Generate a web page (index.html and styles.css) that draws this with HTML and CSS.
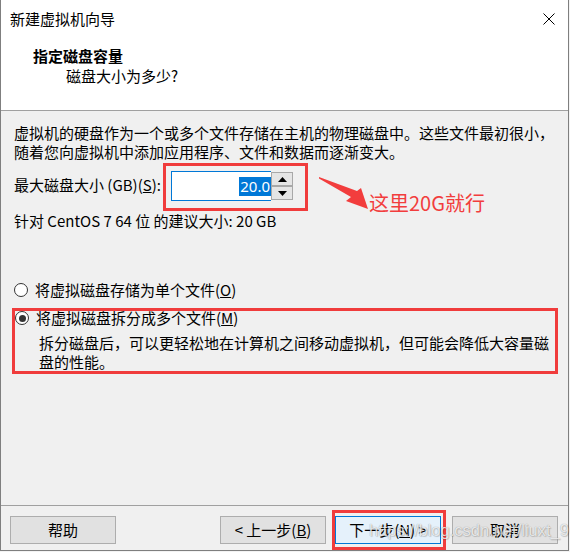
FILE: index.html
```html
<!DOCTYPE html>
<html lang="zh-CN">
<head>
<meta charset="utf-8">
<title>新建虚拟机向导</title>
<link rel="stylesheet" href="styles.css">
</head>
<body>
<div class="window">
  <div class="top">
    <div class="titlebar">
      <span class="title">新建虚拟机向导</span>
      <svg class="close" width="12" height="12" viewBox="0 0 12 12"><path d="M0.5 0.5 L11.5 11.5 M11.5 0.5 L0.5 11.5" stroke="#000" stroke-width="1" fill="none"/></svg>
    </div>
    <div class="heading">指定磁盘容量</div>
    <div class="sub">磁盘大小为多少?</div>
  </div>
  <div class="content">
    <p class="intro">虚拟机的硬盘作为一个或多个文件存储在主机的物理磁盘中。这些文件最初很小，<br>随着您向虚拟机中添加应用程序、文件和数据而逐渐变大。</p>
    <div class="size-row">
      <span class="size-label">最大磁盘大小 (GB)(<u>S</u>):</span>
      <div class="mark spin-mark">
        <div class="spin">
          <div class="spin-input"><span class="sel">20.0</span></div>
          <div class="spin-btns">
            <div class="spin-btn"><svg width="9" height="5" viewBox="0 0 9 5"><polygon points="4.5,0 9,5 0,5" fill="#000"/></svg></div>
            <div class="spin-btn"><svg width="9" height="5" viewBox="0 0 9 5"><polygon points="0,0 9,0 4.5,5" fill="#000"/></svg></div>
          </div>
        </div>
      </div>
      <svg class="arrow" width="62" height="42" viewBox="0 0 62 42"><polygon points="8,7 46,21 50,18 57,39 35,31 40,27 8,8.5" fill="#f23d3d"/></svg>
      <span class="note">这里20G就行</span>
    </div>
    <div class="rec">针对 CentOS 7 64 位 的建议大小: 20 GB</div>
    <div class="radio-row first">
      <span class="radio"></span>
      <span class="radio-text">将虚拟磁盘存储为单个文件(<u>O</u>)</span>
    </div>
    <div class="mark option-mark">
      <div class="radio-row second">
        <span class="radio checked"></span>
        <span class="radio-text">将虚拟磁盘拆分成多个文件(<u>M</u>)</span>
      </div>
      <p class="desc">拆分磁盘后，可以更轻松地在计算机之间移动虚拟机，但可能会降低大容量磁<br>盘的性能。</p>
    </div>
  </div>
  <div class="footer">
    <div class="btn help">帮助</div>
    <div class="btn back">&lt; 上一步(<u>B</u>)</div>
    <div class="mark next-mark"><div class="btn next">下一步(<u>N</u>) &gt;</div></div>
    <div class="btn cancel">取消</div>
  </div>
  <div class="watermark">https://blog.csdn.net/liuxt_9</div>
</div>
</body>
</html>
```
FILE: styles.css
```css
html, body {
  margin: 0;
  padding: 0;
}
body {
  width: 570px;
  height: 552px;
  overflow: hidden;
  background: #f3f3f3;
  font-family: "Noto Sans CJK SC", "Microsoft YaHei", sans-serif;
  font-size: 15px;
  color: #000;
}
.window {
  position: relative;
  width: 567px;
  height: 550px;
  border-left: 1px solid #7f7f7f;
  border-right: 1px solid #7f7f7f;
  border-bottom: 1px solid #7f7f7f;
  background: #f0f0f0;
  display: flex;
  flex-direction: column;
}
.top {
  height: 110px;
  background: #fff;
  border-bottom: 1px solid #a0a0a0;
  flex: none;
}
.titlebar {
  height: 38px;
  display: flex;
  align-items: center;
  justify-content: space-between;
  padding-left: 9px;
  padding-right: 13px;
}
.title {
  line-height: 20px;
}
.close {
  display: block;
}
.heading {
  margin-top: 8px;
  padding-left: 32px;
  font-weight: bold;
  line-height: 20px;
}
.sub {
  padding-left: 65px;
  line-height: 20px;
}
.content {
  flex: 1;
  padding: 12px 0 0 13px;
}
.intro {
  margin: 0;
  line-height: 19px;
  white-space: nowrap;
}
.size-row {
  display: flex;
  align-items: flex-start;
  margin-top: 2px;
}
.size-label {
  width: 149px;
  margin-top: 12px;
  line-height: 20px;
  white-space: nowrap;
}
.mark {
  border: 3px solid #f03c3c;
}
.spin-mark {
  padding: 5px 12px 7px 5px;
}
.spin {
  display: flex;
  height: 30px;
}
.spin-input {
  width: 99px;
  height: 28px;
  border: 1px solid #0078d7;
  border-right: none;
  background: #fff;
  display: flex;
  align-items: center;
  justify-content: flex-end;
}
.sel {
  background: #0078d7;
  color: #fff;
  font-family: "Noto Sans", "Segoe UI", sans-serif;
  font-size: 15px;
  line-height: 19px;
  padding: 0 1px;
}
.spin-btns {
  width: 22px;
  display: flex;
  flex-direction: column;
  justify-content: space-between;
  padding: 1px 0;
  box-sizing: border-box;
}
.spin-btn {
  height: 13px;
  border: 1px solid #a8a8a8;
  background: #e5e5e5;
  display: flex;
  align-items: center;
  justify-content: center;
}
.spin-btn svg {
  display: block;
}
.arrow {
  display: block;
  margin-left: 3px;
  margin-top: 7px;
}
.note {
  margin-left: -4px;
  margin-top: 28px;
  color: #f23d3d;
  font-size: 20px;
  line-height: 24px;
  white-space: nowrap;
}
.rec {
  margin-top: -3px;
  line-height: 18px;
}
.radio-row {
  display: flex;
  align-items: center;
}
.radio-row.first {
  margin-top: 50px;
  height: 20px;
  margin-left: 0;
}
.radio {
  width: 12px;
  height: 12px;
  border: 1px solid #333;
  border-radius: 50%;
  background: #fff;
  position: relative;
  flex: none;
}
.radio.checked::after {
  content: "";
  position: absolute;
  left: 2.5px;
  top: 2.5px;
  width: 7px;
  height: 7px;
  border-radius: 50%;
  background: #333;
}
.radio-text {
  margin-left: 7px;
  line-height: 20px;
  white-space: nowrap;
}
.option-mark {
  margin-top: 8px;
  margin-left: -2px;
  width: 540px;
}
.radio-row.second {
  margin-top: -2px;
  height: 18px;
  margin-left: 0;
}
.desc {
  margin: 6px 0 0 0;
  padding-left: 24px;
  line-height: 19px;
  white-space: nowrap;
}
.footer {
  flex: none;
  height: 45px;
  border-top: 1px solid #a0a0a0;
  box-sizing: border-box;
  display: flex;
  align-items: flex-start;
  padding: 10px 0 0 9px;
}
.btn {
  width: 104px;
  height: 26px;
  border: 1px solid #adadad;
  background: #e1e1e1;
  display: flex;
  align-items: center;
  justify-content: center;
  line-height: 20px;
  white-space: nowrap;
  flex: none;
}
.back {
  margin-left: 104px;
}
.next-mark {
  margin-top: -6px;
  margin-left: 6px;
  padding: 3px 2px 3px 0;
}
.next {
  background: #e5f1fb;
  border-color: #0078d7;
}
.cancel {
  margin-left: 6px;
}
.watermark {
  position: absolute;
  left: 368px;
  top: 520px;
  font-family: "Liberation Sans", Arial, sans-serif;
  font-size: 16.5px;
  line-height: 20px;
  color: rgba(255, 255, 255, 0.8);
  text-shadow: 0 0 1px rgba(0, 0, 0, 0.4), 1px 1px 1px rgba(0, 0, 0, 0.15);
  white-space: nowrap;
}
```
